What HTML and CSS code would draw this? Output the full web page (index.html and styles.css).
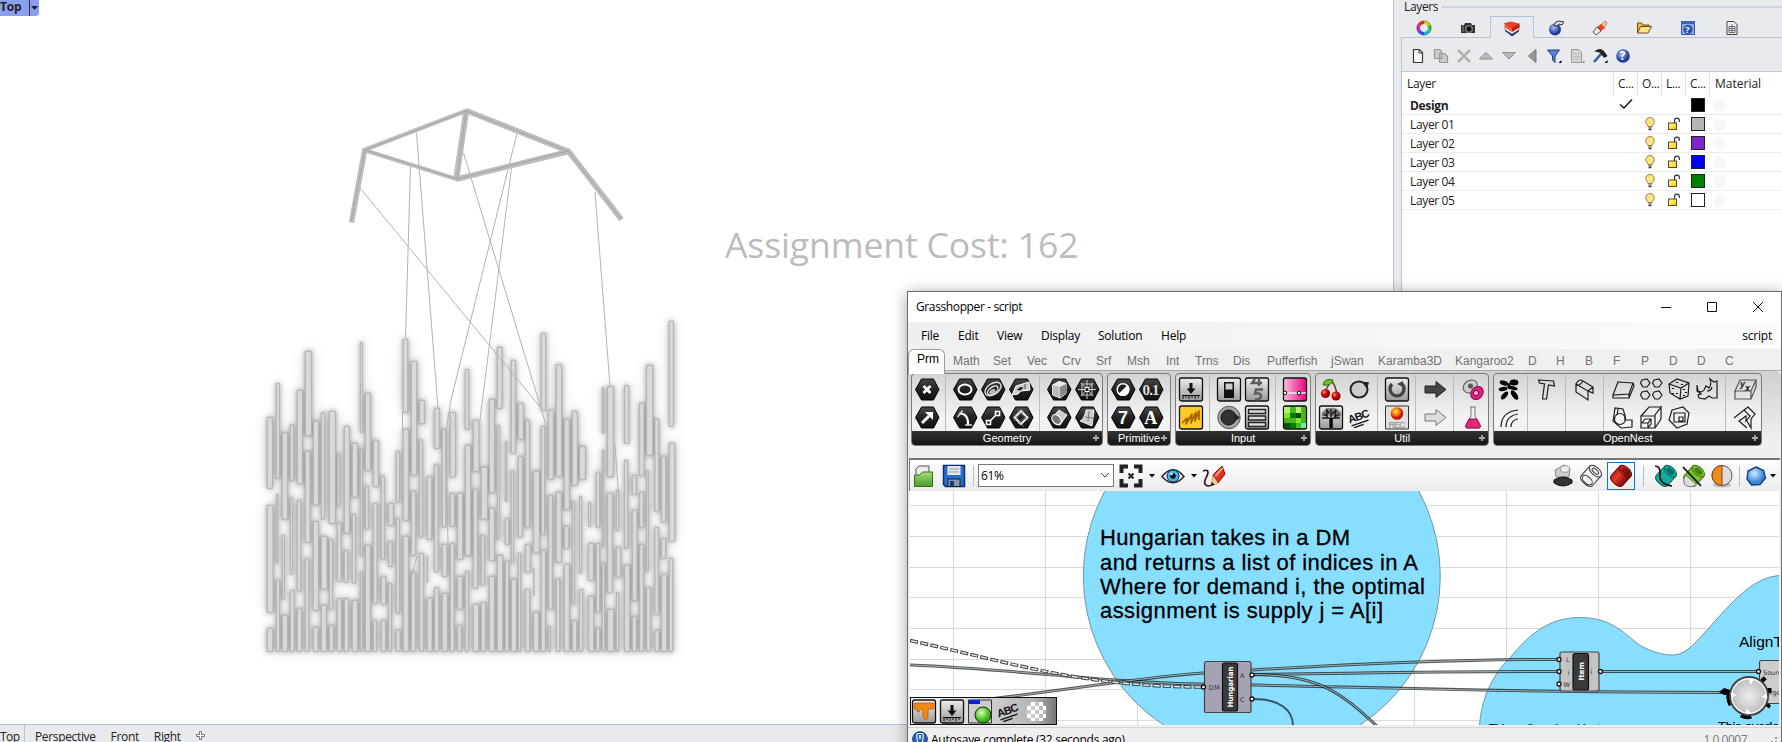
FILE: index.html
```html
<!DOCTYPE html>
<html lang="en">
<head>
<meta charset="utf-8">
<title>Grasshopper - script</title>
<link rel="stylesheet" href="styles.css">
</head>
<body>
<svg class="defs" width="0" height="0" aria-hidden="true">
  <defs>
    <linearGradient id="gBlack" x1="0" y1="0" x2="0" y2="1"><stop offset="0" stop-color="#484848"/><stop offset=".5" stop-color="#222"/><stop offset="1" stop-color="#111"/></linearGradient>
    <linearGradient id="gGrey" x1="0" y1="0" x2="0" y2="1"><stop offset="0" stop-color="#eee"/><stop offset="1" stop-color="#999"/></linearGradient>
    <linearGradient id="gPink"><stop offset="0" stop-color="#f6bfdc"/><stop offset="1" stop-color="#f0007c"/></linearGradient>
    <linearGradient id="gYellow" x1="0" y1="0" x2="1" y2="1"><stop offset="0" stop-color="#fff8b0"/><stop offset="1" stop-color="#ffc800"/></linearGradient>
    <linearGradient id="gFolder" x1="0" y1="0" x2="0" y2="1"><stop offset="0" stop-color="#a8dc7c"/><stop offset="1" stop-color="#4c9a2a"/></linearGradient>
    <linearGradient id="gRed"><stop offset="0" stop-color="#c81c14"/><stop offset=".35" stop-color="#e8382c"/><stop offset="1" stop-color="#7a0c06"/></linearGradient>
    <radialGradient id="gCherry" cx=".35" cy=".35"><stop offset="0" stop-color="#ff9a90"/><stop offset=".5" stop-color="#e01010"/><stop offset="1" stop-color="#900"/></radialGradient>
    <radialGradient id="gOrange" cx=".4" cy=".35"><stop offset="0" stop-color="#ffe680"/><stop offset=".5" stop-color="#ff8a00"/><stop offset="1" stop-color="#c01800"/></radialGradient>
    <radialGradient id="gGreen" cx=".4" cy=".35"><stop offset="0" stop-color="#d8ffb0"/><stop offset="1" stop-color="#34b810"/></radialGradient>
    <radialGradient id="gBlue" cx=".4" cy=".35"><stop offset="0" stop-color="#a8c0f4"/><stop offset="1" stop-color="#1c3c9c"/></radialGradient>
    <radialGradient id="gSky" cx=".4" cy=".35"><stop offset="0" stop-color="#d0ecff"/><stop offset="1" stop-color="#3a86dc"/></radialGradient>
    <radialGradient id="gKnob"><stop offset="0" stop-color="#eee"/><stop offset="1" stop-color="#bbb"/></radialGradient>
    <symbol id="hex" viewBox="0 0 28 28"><path d="M2.500 14.500 8.500 4h12l5.500 10.500L20.500 25h-12z" fill="url(#gBlack)" stroke="#000"/></symbol>
    <symbol id="tile" viewBox="0 0 28 28"><rect x="2.500" y="3" width="23" height="23" rx="2" fill="url(#gGrey)" stroke="#111" stroke-width="1.300"/></symbol>
    <symbol id="abc" viewBox="0 0 28 28"><g transform="rotate(-19 14 14)"><text x="3" y="17" class="abc-text" textLength="22">ABC</text><path d="M4 20h18M6 22.500h10" stroke="#111" stroke-width="1.300"/></g></symbol>
    <symbol id="down" viewBox="0 0 28 28"><path d="M14 8v6" stroke="#111" stroke-width="3"/><path d="M9.500 13.500h9L14 19z" fill="#111"/><path d="M5 20.500h18M6 20v4M9 20v3M12 20v4M15 20v3M18 20v4M21 20v3" stroke="#111"/></symbol>
    <symbol id="cyl" viewBox="0 0 24 24"><g transform="rotate(42 12 12)"><path d="M4.500 6v12q0 4 7.500 4t7.500-4V6z"/><ellipse cx="12" cy="5.500" rx="7.500" ry="4"/><ellipse cx="12" cy="5.500" rx="4" ry="1.900" fill="#000" fill-opacity=".35"/></g></symbol>
    <symbol id="bulb" viewBox="0 0 14 14"><path d="M5 9.500C4.500 7.500 2.800 7 2.800 4.700a4.200 4.200 0 0 1 8.400 0C11.200 7 9.500 7.500 9 9.500z" fill="#ffe48a" stroke="#96701c" stroke-width=".9"/><path d="M5.200 11h3.600M5.600 12.600h2.800" stroke="#333" stroke-width="1.200"/></symbol>
    <symbol id="lock" viewBox="0 0 14 14"><path d="M7.500 6V3.500a2.300 2.300 0 0 1 4.800 0V5" fill="none" stroke="#333" stroke-width="1.200"/><rect x="1.500" y="6" width="8" height="6.500" fill="url(#gYellow)" stroke="#5a4a18"/></symbol>
    <symbol id="plus" viewBox="0 0 8 8"><path d="M4 1v6M1 4h6" stroke="#aaa" stroke-width="1.800"/></symbol>
  </defs>
</svg>

<main class="viewport">
  <svg class="scene" viewBox="0 0 1393 724">
    <defs>
      <filter id="soft" x="-10%" y="-10%" width="120%" height="120%"><feGaussianBlur stdDeviation="8"/></filter>
      <filter id="wide" x="-10%" y="-10%" width="120%" height="120%"><feGaussianBlur stdDeviation="20"/></filter>
    </defs>
    <g transform="translate(240 300) scale(.33333)">
      <g id="haze" filter="url(#wide)" opacity=".2"></g>
      <g id="shade" filter="url(#soft)" opacity=".58"></g>
      <g id="bars"></g>
    </g>
    <g class="links">
      <path d="M360 188 541 408M410.500 166 405.500 338M416.500 133 438 408M463.500 153 546 425L549 436M517 133 451 400M511.500 168 480 420M595 192 610 386M615 445 619 500M451 400 446 431 448 545M417 556 412 575M402.500 412V434"/>
    </g>
    <g class="frame">
      <path d="M364 150 467 110.500" stroke-width="4.500"/><path d="M466 110.500 569 151.500" stroke-width="5.500"/>
      <path d="M365 148.500 351.500 222.500" stroke-width="5.500"/><path d="M364 150 458 179.500" stroke-width="4"/>
      <path d="M466.500 109.500 456 180" stroke-width="6"/><path d="M457 179 569 151.500" stroke-width="5.500"/>
      <path d="M567.500 150 621.500 219.500" stroke-width="5.500"/>
    </g>
    <path class="frame-axis" d="M351 222 365 150 466 111 568 151 621 219M365 150 457 179 568 151M466 111 457 179"/>
    <text x="725" y="258" class="cost" textLength="353.500">Assignment Cost: 162</text>
  </svg>
  <div class="view-tag"><b>Top</b><svg width="10" height="16"><path d="M1 6h7L4.500 10z" fill="#222"/></svg></div>
  <nav class="view-tabs"><span class="on">Top</span><span>Perspective</span><span>Front</span><span>Right</span><svg width="10" height="10"><path d="M3.500.5h2v3h3v2h-3v3h-2v-3h-3v-2h3z" fill="#fff" stroke="#777"/></svg></nav>
</main>

<aside class="panel">
  <div class="panel-title"><span>Layers</span></div>
  <div class="panel-tabs">
    <i><svg viewBox="0 0 16 16"><g fill="none" stroke-width="3.200"><path d="M8 2.500a5.500 5.500 0 0 1 4.800 2.700" stroke="#f4c400"/><path d="M12.800 5.200a5.500 5.500 0 0 1 0 5.600" stroke="#30c830"/><path d="M12.800 10.800A5.500 5.500 0 0 1 8 13.500" stroke="#10b8d0"/><path d="M8 13.500a5.500 5.500 0 0 1-4.800-2.700" stroke="#2848f0"/><path d="M3.200 10.800a5.500 5.500 0 0 1 0-5.600" stroke="#d818c8"/><path d="M3.200 5.200A5.500 5.500 0 0 1 8 2.500" stroke="#f02818"/></g><circle cx="8" cy="8" r="7.200" fill="none" stroke="#444" stroke-width=".5"/></svg></i>
    <i><svg viewBox="0 0 16 16"><path d="M1 5h3l1-2h6l1 2h3v8H1z" fill="#333"/><circle cx="9" cy="9" r="4" fill="#777"/><circle cx="9" cy="9" r="2.500" fill="#111"/><path d="M3 5v7" stroke="#888"/></svg></i>
    <i class="on"><svg viewBox="0 0 16 16"><path d="M1 6v4l7 5.500 7-5V6z" fill="#223a7c"/><path d="M.8 5v3.500L8 13l7.200-4.500V5z" fill="#f4f4f4" stroke="#555" stroke-width=".5"/><path d="M.5 2.500 8 6v5L1 6.500z" fill="#ff5a30"/><path d="M.5 2.500 7 1l8.500 2L8 6.500z" fill="#f04020" stroke="#a41c08" stroke-width=".5"/><path d="M8 6.500 15.500 3v3.500L8 11z" fill="#b82008"/></svg></i>
    <i><svg viewBox="0 0 16 16"><circle cx="7" cy="9.500" r="6" fill="url(#gBlue)"/><path d="M6 5q1-4 5-4l5 1-2 3-3-1-2 2z" fill="#ddd" stroke="#333"/></svg></i>
    <i><svg viewBox="0 0 16 16"><path d="m9 5 4-4 2 2-3 5z" fill="#f4c890" stroke="#84502c" stroke-width=".6"/><path d="m5 7 4-3 4 4-4 3z" fill="#ee3c1c"/><path d="m1 12 4-5 4 4-5 4z" fill="#eee" stroke="#555"/></svg></i>
    <i><svg viewBox="0 0 16 16"><path d="M1.500 13V3h4l1.500 2h6v2" fill="#e8b838" stroke="#6c4c10"/><path d="m1.500 13 3-6.500h11L12 13z" fill="#ffe48c" stroke="#6c4c10"/></svg></i>
    <i><svg viewBox="0 0 16 16"><path d="M1.500 1.500h13v13h-13z" fill="#8cacec" stroke="#38549c"/><path d="M1 1h14v3H1z" fill="#4064b8"/><circle cx="8" cy="9.500" r="4.600" fill="#2c50b0"/><text x="5.300" y="13" class="qmark-s">?</text></svg></i>
    <i><svg viewBox="0 0 16 16"><path d="M3 1.500h7l3 3v10H3z" fill="#eee" stroke="#444"/><path d="M5 6.500h6v6H5zM5 8.500h6M5 10.500h6M8 4v9" stroke="#555" fill="none" stroke-width=".8"/></svg></i>
  </div>
  <div class="panel-body">
    <div class="panel-tools">
      <i><svg viewBox="0 0 16 16"><path d="M3.500 1.500h6l3 3v10h-9z" fill="#fff" stroke="#333" stroke-width="1.200"/><path d="M9 1.500v3.500h3.500" fill="none" stroke="#333"/></svg></i>
      <i><svg viewBox="0 0 16 16"><path d="M1.500 1.500h5l2 2v7h-7zM6.500 5.500h5l3 3v6h-8z" fill="#ccc" stroke="#999" stroke-width="1.200"/></svg></i>
      <i><svg viewBox="0 0 16 16"><path d="M2 2l12 12M14 2 2 14" stroke="#aaa" stroke-width="2.400"/></svg></i>
      <i><svg viewBox="0 0 16 16"><path d="M1.500 11h13L8 4.500z" fill="#bbb" stroke="#8c8c8c"/></svg></i>
      <i><svg viewBox="0 0 16 16"><path d="M1.500 4.500h13L8 11z" fill="#bbb" stroke="#8c8c8c"/></svg></i>
      <i><svg viewBox="0 0 16 16"><path d="M12 1.500v13L4.500 8z" fill="#999" stroke="#777"/></svg></i>
      <i><svg viewBox="0 0 16 16"><path d="M1.500 2h12L9 8v6.500L6.500 12V8z" fill="#5c84d4" stroke="#1c3c88"/><path d="M15.500 12v3h-3z"/></svg></i>
      <i><svg viewBox="0 0 16 16"><path d="M2.500 1.500h7l3 3v10h-10z" fill="#d4d4d4" stroke="#999"/><path d="M4 6h6M4 8.500h6M4 11h6" stroke="#bbb"/><path d="M15.500 12v3h-3z" fill="#999"/></svg></i>
      <i><svg viewBox="0 0 16 16"><path d="M2 14 9 6" stroke="#345ca8" stroke-width="2.600"/><path d="M2.500 3.500C5 .5 9 0 11.500 2.500L15.500 8l-3 2L9 6.500 7.500 4.500z" fill="#222"/><path d="M15.500 12v3h-3z"/></svg></i>
      <i><svg viewBox="0 0 16 16"><circle cx="8" cy="8" r="6.800" fill="url(#gBlue)"/><text x="4.700" y="12.300" class="qmark">?</text></svg></i>
    </div>
    <div class="table">
      <div class="row head"><span>Layer</span><span>C...</span><span>O...</span><span>L...</span><span>C...</span><span>Material</span></div>
      <div class="row current"><span>Design</span><span><svg width="14" height="12"><path d="M1 6.500 5 10 13 1.500" fill="none" stroke="#111" stroke-width="1.400"/></svg></span><span></span><span></span><span><i class="sw black"></i></span><span><i class="mat"></i></span></div>
      <div class="row"><span>Layer 01</span><span></span><span><svg><use href="#bulb"/></svg></span><span><svg><use href="#lock"/></svg></span><span><i class="sw grey"></i></span><span><i class="mat"></i></span></div>
      <div class="row"><span>Layer 02</span><span></span><span><svg><use href="#bulb"/></svg></span><span><svg><use href="#lock"/></svg></span><span><i class="sw violet"></i></span><span><i class="mat"></i></span></div>
      <div class="row"><span>Layer 03</span><span></span><span><svg><use href="#bulb"/></svg></span><span><svg><use href="#lock"/></svg></span><span><i class="sw blue"></i></span><span><i class="mat"></i></span></div>
      <div class="row"><span>Layer 04</span><span></span><span><svg><use href="#bulb"/></svg></span><span><svg><use href="#lock"/></svg></span><span><i class="sw green"></i></span><span><i class="mat"></i></span></div>
      <div class="row"><span>Layer 05</span><span></span><span><svg><use href="#bulb"/></svg></span><span><svg><use href="#lock"/></svg></span><span><i class="sw white"></i></span><span><i class="mat"></i></span></div>
    </div>
  </div>
</aside>

<section class="window">
  <header class="title"><span>Grasshopper - script</span>
    <div class="controls"><svg viewBox="0 0 12 12"><path d="M1 6.500h10"/></svg><svg viewBox="0 0 12 12"><path d="M1.500 1.500h9v9h-9z"/></svg><svg viewBox="0 0 12 12"><path d="m1 1 10 10M11 1 1 11"/></svg></div>
  </header>
  <nav class="menu"><span>File</span><span>Edit</span><span>View</span><span>Display</span><span>Solution</span><span>Help</span><span class="doc">script</span></nav>
  <nav class="tabs"><span class="on">Prm</span><span>Math</span><span>Set</span><span>Vec</span><span>Crv</span><span>Srf</span><span>Msh</span><span>Int</span><span>Trns</span><span>Dis</span><span>Pufferfish</span><span>jSwan</span><span>Karamba3D</span><span>Kangaroo2</span><span>D</span><span>H</span><span>B</span><span>F</span><span>P</span><span>D</span><span>D</span><span>C</span></nav>

  <div class="ribbon">
    <div class="group">
      <div class="icons">
        <div class="set">
          <svg viewBox="0 0 28 28"><use href="#hex"/><path d="m10.500 11 7 7M17.500 11l-7 7" stroke="#fff" stroke-width="2.800"/></svg>
          <svg viewBox="0 0 28 28"><use href="#hex"/><path d="m9 20 7-7" stroke="#fff" stroke-width="3"/><path d="M12 9h8v8z" fill="#fff"/></svg>
        </div>
        <div class="set">
          <svg viewBox="0 0 28 28"><use href="#hex"/><ellipse cx="14" cy="14.500" rx="6.500" ry="5" fill="none" stroke="#fff" stroke-width="2"/></svg>
          <svg viewBox="0 0 28 28"><use href="#hex"/><path d="M8.500 10.500q9 0 8.500 11.500" fill="none" stroke="#fff" stroke-width="2.200"/><path d="m6.500 14 5-6.500M14 22h7" stroke="#ddd" stroke-width="1.400"/></svg>
          <svg viewBox="0 0 28 28"><use href="#hex"/><g transform="rotate(-35 14 14)" fill="none" stroke="#ddd" stroke-width="1.500"><ellipse cx="14" cy="14" rx="9" ry="5.500"/><ellipse cx="13" cy="15" rx="6" ry="3.200"/><ellipse cx="12" cy="15.500" rx="2.500" ry="1"/></g></svg>
          <svg viewBox="0 0 28 28"><use href="#hex"/><path d="m10 19 9-9" stroke="#fff" stroke-width="1.600"/><path d="M7.500 17.500h4v4h-4zM16.500 8.500h4v4h-4z" fill="#222" stroke="#fff" stroke-width="1.600"/></svg>
          <svg viewBox="0 0 28 28"><use href="#hex"/><path d="m5 20 4-9 13-4 1 8-9 1-3 3z" fill="#ccc" stroke="#fff"/><path d="m9.500 15 4-3 3 .5-3 3z" fill="#222"/><path d="M18 9v5" stroke="#555"/></svg>
          <svg viewBox="0 0 28 28"><use href="#hex"/><path d="m14 8 6.500 6.500L14 21l-6.500-6.500z" fill="none" stroke="#eee" stroke-width="2"/><path d="m7 11 10 13M10.500 7l11 11M21 11 11 21M17 7 7 18" stroke="#888" stroke-width=".7"/></svg>
        </div>
        <div class="set">
          <svg viewBox="0 0 28 28"><use href="#hex"/><path d="m7.500 10 6.500-3.500 7 2v10L15 23l-7.500-3z" fill="#e8e8e8" stroke="#fff"/><path d="m7.500 10 7 2v10.500L7.500 20z" fill="#bbb"/><path d="m15 12 6-3v9.500L15 22.500z" fill="#888"/></svg>
          <svg viewBox="0 0 28 28"><use href="#hex"/><path d="m7 15 7-8 8 5-7 10q-8 0-8-7z" fill="#ccc" stroke="#eee"/><ellipse cx="11.500" cy="16.500" rx="4" ry="5.500" transform="rotate(-40 11.500 16.500)" fill="#777" stroke="#fff"/></svg>
          <svg viewBox="0 0 28 28"><use href="#hex"/><path d="M14 5v19M5 14.500h18M8 8l12 13M20 8 8 21M9 9h10v11H9z" stroke="#ccc" fill="none"/><path d="M12 12.500h4v4h-4z" fill="#222" stroke="#fff"/></svg>
          <svg viewBox="0 0 28 28"><use href="#hex"/><path d="M13 7h8l-2 16-12-5q4-1 6-11z" fill="#ccc" stroke="#eee"/><path d="m12 14 8 1M15 18l1-10" stroke="#666" stroke-width=".8"/></svg>
        </div>
      </div>
      <footer><span>Geometry</span><svg><use href="#plus"/></svg></footer>
    </div>

    <div class="group">
      <div class="icons">
        <div class="set">
          <svg viewBox="0 0 28 28"><use href="#hex"/><circle cx="14" cy="14.500" r="5.800" fill="#222" stroke="#fff" stroke-width="1.500"/><path d="M18.500 10a6 6 0 0 1-9 9z" fill="#fff"/></svg>
          <svg viewBox="0 0 28 28"><use href="#hex"/><text x="9" y="20.500" class="glyph">7</text></svg>
          <svg viewBox="0 0 28 28"><use href="#hex"/><text x="5.500" y="20" class="glyph thin" textLength="17">0.1</text></svg>
          <svg viewBox="0 0 28 28"><use href="#hex"/><text x="7.200" y="20.500" class="glyph serif">A</text></svg>
        </div>
      </div>
      <footer><span>Primitive</span><svg><use href="#plus"/></svg></footer>
    </div>

    <div class="group">
      <div class="icons">
        <div class="set">
          <svg viewBox="0 0 28 28"><use href="#tile"/><use href="#down"/></svg>
          <svg viewBox="0 0 28 28"><rect x="2.500" y="3" width="23" height="23" rx="2" fill="#ffcb28" stroke="#111" stroke-width="1.300"/><path d="m5 20 5-5-1 6 6-10-1 9 5-11-1 9 4-10v9" fill="none" stroke="#a86000" stroke-width="1.700" stroke-linejoin="round"/></svg>
        </div>
        <div class="set">
          <svg viewBox="0 0 28 28"><use href="#tile"/><path d="M9 7h10v16H9z" fill="#111"/><path d="M10.500 8.500h7v6h-7z" fill="#ccc"/></svg>
          <svg viewBox="0 0 28 28"><circle cx="14" cy="14.500" r="11.200" fill="#a4a4a4" stroke="#555"/><circle cx="13.500" cy="14.500" r="7.500" fill="#333" stroke="#111"/><path d="m19 10 6 4.500-6 4.500z" fill="#222"/></svg>
          <svg viewBox="0 0 28 28"><use href="#tile"/><g fill="none" stroke="#5c5c5c" stroke-width="2.400"><path d="m12 4-3 4h10M16 3v8M20 14.500h-7l-1 4q6-1 6 2.500t-6 3.500"/></g></svg>
          <svg viewBox="0 0 28 28"><use href="#tile"/><path d="M5.500 6.500h17v4h-17zM5.500 13h17v4h-17zM5.500 19.500h17v4h-17z" fill="#ddd" stroke="#222" stroke-width="1.400"/></svg>
        </div>
        <div class="set">
          <svg viewBox="0 0 28 28"><rect x="2.500" y="3" width="23" height="23" rx="2" fill="url(#gPink)" stroke="#111" stroke-width="1.300"/><path d="M3 18h22" stroke="#eee" stroke-width="1.300"/><circle cx="4" cy="18" r="1.800" fill="#fff" stroke="#111"/><circle cx="18" cy="18" r="1.800" fill="#fff" stroke="#111"/></svg>
          <svg viewBox="0 0 28 28"><rect x="2.500" y="3" width="23" height="23" rx="2" fill="#46b818" stroke="#111" stroke-width="1.300"/><path d="M3 4h6v6H3zM15 4h5v6h-5z" fill="#b8f070"/><path d="M3 10h6v5H3zM15 15h5v5h-5z" fill="#78e828"/><path d="M9 10h6v5H9zM9 20h6v5H9z" fill="#087808"/><path d="M15 10h5v5h-5zM3 20h6v5H3z" fill="#0c4c10"/><path d="M20 20h5v5h-5z" fill="#60f0b0"/></svg>
        </div>
      </div>
      <footer><span>Input</span><svg><use href="#plus"/></svg></footer>
    </div>

    <div class="group">
      <div class="icons">
        <div class="set">
          <svg viewBox="0 0 28 28"><path d="M8 17Q12 8 15 6q4 6 5 14" fill="none" stroke="#5a3c18" stroke-width="1.400"/><path d="M6 10Q7 3 16 5q-1 6-10 5z" fill="#70c020" stroke="#2c7008"/><circle cx="8.500" cy="18.500" r="4.600" fill="url(#gCherry)"/><circle cx="19" cy="21" r="4.600" fill="url(#gCherry)"/></svg>
          <svg viewBox="0 0 28 28"><use href="#tile"/><path d="M13 25V16L7 11M15 25v-9l7-5M14 18V6M10 14V8M18 14l1-7M12 10 9 6M15 11l4-4M17 15h6M11 15H5" stroke="#111" stroke-width="1.300" fill="none"/><path d="M13 15h2.500v10H13z"/><path d="M5 13q-1-4 3-6 2-3 6-2 5-1 7 2 4 2 3 6-4 2-7 0-3 1-6-1-3 2-6 1z" fill="#111" opacity=".45"/></svg>
          <svg viewBox="0 0 28 28"><ellipse cx="14" cy="14.500" rx="8.500" ry="8" fill="#ccc" stroke="#222" stroke-width="2"/><path d="M17 7h7l-2 7z" fill="#222"/></svg>
          <svg viewBox="0 0 28 28"><use href="#abc"/></svg>
        </div>
        <div class="set">
          <svg viewBox="0 0 28 28"><use href="#tile"/><path d="M9 9a7 7 0 1 0 10 0" fill="none" stroke="#444" stroke-width="3.400"/><path d="m20 12-6-3 6-3z" fill="#444"/></svg>
          <svg viewBox="0 0 28 28"><path d="M2.500 3h23v23h-23z" fill="#e0e0e0" stroke="#333"/><circle cx="14" cy="10.500" r="6.300" fill="url(#gOrange)"/><text x="5.500" y="25" class="rec" textLength="17">REC</text></svg>
        </div>
        <div class="set">
          <svg viewBox="0 0 28 28"><path d="M4 11h11V6.500l10 8-10 8V18H4z" fill="#444" stroke="#222"/></svg>
          <svg viewBox="0 0 28 28"><path d="M4 11h11V6.500l10 8-10 8V18H4z" fill="#ddd" stroke="#777"/></svg>
        </div>
        <div class="set">
          <svg viewBox="0 0 28 28"><ellipse cx="11" cy="11.500" rx="7.500" ry="6" transform="rotate(-35 11 11)" fill="#ccc" stroke="#555"/><circle cx="11.500" cy="11" r="2.500" fill="#555"/><ellipse cx="18" cy="18" rx="7" ry="5.800" transform="rotate(-50 18 18)" fill="#e0207c" stroke="#801048"/><circle cx="17" cy="18" r="2.600" fill="#fac" stroke="#604"/></svg>
          <svg viewBox="0 0 28 28"><path d="M11 4h6M12 4v9L6.500 23q0 2 2 2h11q2 0 2-2L16 13V4" fill="#eee" stroke="#777"/><path d="m10 16-3.500 7q0 2 2 2h11q2 0 2-2L18 16z" fill="#e02878" stroke="#a01050"/></svg>
        </div>
      </div>
      <footer><span>Util</span><svg><use href="#plus"/></svg></footer>
    </div>

    <div class="group line">
      <div class="icons">
        <div class="set">
          <svg viewBox="0 0 28 28"><g fill="#000" stroke="none"><ellipse cx="9" cy="8" rx="4.500" ry="2.300" transform="rotate(20 9 8)"/><ellipse cx="19" cy="7.500" rx="4.400" ry="2.900"/><ellipse cx="8" cy="14" rx="4.500" ry="2" transform="rotate(-10 8 14)"/><ellipse cx="18" cy="13" rx="4.800" ry="1.900" transform="rotate(15 18 13)"/><ellipse cx="9.500" cy="20.500" rx="4.800" ry="2.300" transform="rotate(-50 9.500 20.500)"/><ellipse cx="19.500" cy="20" rx="5.500" ry="2.600" transform="rotate(55 19.500 20)"/><ellipse cx="14" cy="11" rx="1.600" ry="3"/></g></svg>
          <svg viewBox="0 0 28 28"><path d="M6 24Q6 9 23 7M11 24q0-11 12-13M16 24q0-7 7-8"/></svg>
        </div>
        <div class="set">
          <svg viewBox="0 0 28 28"><path d="m5.500 5 15 1 1 5-6-1-2 14h-4l2-15-5-1z"/></svg>
        </div>
        <div class="set">
          <svg viewBox="0 0 28 28"><path d="m5 9 12 7v9L5 17zM5 9q3-6 7-3l10 6v6l-5-2M22 12l-5 4M5 9q2 4 7-3"/></svg>
        </div>
        <div class="set">
          <svg viewBox="0 0 28 28"><path d="m9 7 15 1-4 11-16 1zM4 20v3h16v-4M20 23l5-12-1-3"/></svg>
          <svg viewBox="0 0 28 28"><path d="m5 12 1-7 8 1 2 6v5h7v7l-11 1-8-7zM9 6l-1 6"/><circle cx="11" cy="16" r="5.500"/></svg>
          <svg viewBox="0 0 28 28"><path d="m5 5 5-1 3 4-3 4H6L3.500 8zM17 5l5-1 3 4-3 4h-4l-2.500-4zM5 17l5-1 3 4-3 4H6l-2.500-4zM17 17l5-1 3 4-3 4h-4l-2.500-4z"/></svg>
          <svg viewBox="0 0 28 28"><path d="M4 13 12 4h12l-6 8v13H4zM4 13h14M18 12l6-8v12l-6 9M5 20l3-4h6v5l-3 4M5 20h6v5M11 20l3-4"/></svg>
          <svg viewBox="0 0 28 28"><path d="m4 9 8-5 12 4-1 13-8 3-10-6zM4 9l12 4 8-5M16 13l-1 11"/><path d="M8 13v1M12 18v1M8 18v1M19 14v1M21 17v1M19 20v1M12 7v1M17 9v1" stroke-width="2.200"/></svg>
          <svg viewBox="0 0 28 28"><path d="m7 7 11-3 6 6-2 11-10 4-8-8zM9 10h11v9H9zM14 14h4v4h-4z"/></svg>
          <svg viewBox="0 0 28 28"><path d="m4 10 1 6q4 2 6-1l2-4 3 2q3-4 1-9l4 3 3-1v17h-5l-3-2-4 3-6-1-1-3 3-1-4-3zM14 16q4 0 5-4"/></svg>
        </div>
        <div class="set">
          <svg viewBox="0 0 28 28"><path d="M4 16 9 5h16l-5 11zM4 16v8h16v-8M20 24l5-12V5" stroke="#555"/><text x="9" y="12" class="xy">y</text><text x="14" y="16" class="xy">x</text></svg>
          <svg viewBox="0 0 28 28"><path d="m3 15 10-8 6 6-4 5v-5l-7 5 8 7M13 7l4-3 7 7-4 5v9l-4-7"/></svg>
        </div>
      </div>
      <footer><span>OpenNest</span><svg><use href="#plus"/></svg></footer>
    </div>
  </div>

  <div class="toolbar">
    <svg viewBox="0 0 24 24"><path d="M4 13V5l3-3h10v9" fill="#eee" stroke="#555"/><path d="M2.500 22.500V11h5l3-3h10v14.500z" fill="url(#gFolder)" stroke="#356c1c"/></svg>
    <svg class="save" viewBox="0 0 24 24"><path d="M1.500 1.500h21v21h-19l-2-2z" fill="#2c6cd0" stroke="#0c2c70" stroke-width="1.500"/><path d="M5.500 2h13v9h-13z" fill="#e4e8f0"/><path d="M7 5h10M7 8h10" stroke="#999"/><path d="M6 15h12v7.500H6z" fill="#8c98a8" stroke="#123"/><path d="M8 17h4v5H8z" fill="#123a80"/></svg>
    <b class="bar"></b>
    <div class="zoom"><span>61%</span><svg width="10" height="6"><path d="m1 1 4 4 4-4" fill="none" stroke="#444"/></svg></div>
    <svg viewBox="0 0 24 24"><path d="M9 2.500H2.500V9M15 2.500h6.500V9M9 21.500H2.500V15M15 21.500h6.500V15" fill="none" stroke="#222" stroke-width="4"/><path d="m9.500 9.500 5 5M14.500 9.500l-5 5" stroke="#222" stroke-width="2"/></svg>
    <svg class="caret" viewBox="0 0 6 4"><path d="M0 0h6L3 3.500z"/></svg>
    <svg viewBox="0 0 24 24"><path d="M1 12.500Q12-1 23 12.500 12 25 1 12.500z" fill="#eee" stroke="#222" stroke-width="1.400"/><circle cx="12" cy="12" r="6" fill="#48b4e0" stroke="#125"/><circle cx="12" cy="12" r="2.800" fill="#012"/><circle cx="10.500" cy="10" r="1.200" fill="#fff"/></svg>
    <svg class="caret" viewBox="0 0 6 4"><path d="M0 0h6L3 3.500z"/></svg>
    <svg viewBox="0 0 24 24"><path d="M1 7q5-2 5 1.500C6 12 1 17 3 20s5 2 6 1" fill="none" stroke="#411" stroke-width="1.700"/><path d="m11 11 9-9 3 8-7 9z" fill="#e03020" stroke="#8c1008"/><path d="m11 11 5 8-7 3z" fill="#f4d090" stroke="#965" stroke-width=".6"/><path d="m13.500 12 7-8" stroke="#ff9a80" stroke-width="2"/><path d="m9 22 .8-4 2.700 2.600z"/></svg>
    <span class="grow"></span>
    <svg viewBox="0 0 24 24"><path d="M4 6 13 1l6 3-1 9H5z" fill="#ccc" stroke="#888"/><ellipse cx="14" cy="5" rx="4.500" ry="3.300" fill="#eee" stroke="#999"/><path d="M3 16q9-6 18 0v3q-9 6-18 0z" fill="#333" stroke="#111"/></svg>
    <svg viewBox="0 0 24 24"><g transform="rotate(42 12 12)" fill="#f6f6f6" stroke="#333"><path d="M4.500 6v12q0 4 7.500 4t7.500-4V6z"/><ellipse cx="12" cy="5.500" rx="7.500" ry="4"/><ellipse cx="12" cy="5.500" rx="4" ry="1.900"/><ellipse cx="12" cy="17.500" rx="6" ry="3.300"/></g></svg>
    <i class="picked"><svg viewBox="0 0 24 24"><use href="#cyl" fill="url(#gRed)" stroke="#5c0804"/></svg></i>
    <b class="bar"></b>
    <svg viewBox="0 0 24 24"><use href="#cyl" fill="#18a8a0" stroke="#065"/><path d="M1 2q6 0 5 9t12 11" fill="none" stroke="#111" stroke-width="1.600"/></svg>
    <svg viewBox="0 0 24 24"><use href="#cyl" fill="#78c428" stroke="#3a7008"/><path d="m3.500 11 11 9.500Q8 25 2.500 20.500 0 16 3.500 11z" fill="#ddd" stroke="#777"/><path d="m1 3 18 19" stroke="#111" stroke-width="1.800"/></svg>
    <svg viewBox="0 0 24 24"><ellipse cx="12" cy="21" rx="9" ry="2.500" fill="#bbb"/><circle cx="12" cy="11.500" r="10" fill="#ddd" stroke="#555"/><path d="M12 1.500a10 10 0 0 0 0 20z" fill="#ee8c20" stroke="#844400"/></svg>
    <b class="bar last"></b>
    <svg viewBox="0 0 24 24"><path d="m12 3 7.500 3.500L21.500 14 16 20.500 7.500 21 3 15l1-8z" fill="url(#gSky)" stroke="#1a3c80" stroke-width="1.400"/></svg>
    <svg class="caret" viewBox="0 0 6 4"><path d="M0 0h6L3 3.500z"/></svg>
  </div>

  <div class="canvas">
    <svg viewBox="910 491 869 234">
      <path class="grid" d="M953.500 491v234M1045.500 491v234M1137.500 491v234M1414.500 491v234M1506.500 491v234M1598.500 491v234M1690.500 491v234M910 505.500h869M910 536.500h869M910 567.500h869M910 597.500h869M910 628.500h869M910 659.500h869M910 689.500h869M910 720.500h869"/>
      <circle class="blob" cx="1261.800" cy="576" r="178.500"/>
      <path class="blob" d="M1479.500 726C1481 700 1492 675 1509 659 1528 636 1547 617.500 1580 617.500S1625 635 1641 646C1650 651 1663 655 1672 655 1686 655 1695 643 1709 628 1735 598 1755 577 1780 575.500V726z"/>
      <g class="notes">
        <text x="1100" y="545" textLength="250">Hungarian takes in a DM</text>
        <text x="1100" y="569.500" textLength="318">and returns a list of indices in A</text>
        <text x="1100" y="594" textLength="325">Where for demand i, the optimal</text>
        <text x="1100" y="618" textLength="283">assignment is supply j = A[i]</text>
      </g>
      <text x="1739" y="647" class="mid-note">AlignTo</text>
      <g class="small-note"><text x="1489" y="732" textLength="111">This realigns the object</text><text x="1718" y="730.500" class="big">This overlays</text></g>
      <g id="wires">
        <path d="M910 665C1030 670 1100 683 1220 684.500S1460 692 1722 692.500"/>
        <path d="M990 699C1090 687 1150 676 1210 672.500S1420 659 1558 659.500"/>
        <path d="M1253 674.500C1380 673 1430 671.500 1558 671.500"/>
        <path d="M1253 674.500C1320 675 1340 692 1378 727"/>
        <path d="M1602 671.500H1758"/>
      </g>
      <path class="chain" d="M910 640.500C1010 662 1080 687 1203 687"/><path class="chain-core" d="M910 640.500C1010 662 1080 687 1203 687"/>
      <path class="single" d="M1253 699C1280 699 1293 710 1293 726"/>
      <g class="node">
        <rect x="1204.500" y="661.500" width="46.500" height="51" rx="2" fill="#a5a3b3"/>
        <rect x="1222.500" y="663" width="15" height="48" rx="2" class="core"/>
        <text transform="translate(1233 707.500) rotate(-90)" class="name" textLength="41" lengthAdjust="spacingAndGlyphs">Hungarian</text>
        <text x="1208.500" y="689.500" class="port" textLength="11">DM</text><text x="1240" y="677.500" class="port">A</text><text x="1240" y="701.500" class="port">C</text>
        <circle cx="1203.500" cy="687" r="2"/><circle cx="1252" cy="675" r="2"/><circle cx="1252" cy="699" r="2"/>
      </g>
      <g class="node">
        <rect x="1560" y="652" width="39" height="39" rx="2" fill="#c4c4c4"/>
        <rect x="1573" y="653.500" width="15.500" height="36.500" rx="2" class="core"/>
        <text transform="translate(1583.500 680.500) rotate(-90)" class="name" textLength="18.500" lengthAdjust="spacingAndGlyphs">Item</text>
        <text x="1566" y="662" class="port">L</text><text x="1567.500" y="674.500" class="port">i</text><text x="1563.500" y="686.500" class="port">W</text><text x="1590.500" y="674" class="port">i</text>
        <circle cx="1559" cy="659.500" r="2"/><circle cx="1559" cy="671.500" r="2"/><circle cx="1559" cy="684" r="2"/><circle cx="1600.500" cy="671.500" r="2"/>
      </g>
      <g class="node">
        <rect x="1759.500" y="660.500" width="30" height="43" rx="2" fill="#ccc"/>
        <text x="1763" y="674.500" class="port">Source</text><text x="1763" y="695" class="port">Target</text>
        <circle cx="1758.500" cy="671.500" r="2"/>
      </g>
      <path d="m1719 692 5-4 6 2v4l-6 1z"/>
      <path d="M1729.500 690q-2 8 1.500 15M1741 715q6 3 10 1M1767 707l2-3M1769 688v5M1762 678l3 3" fill="none" stroke="#000" stroke-width="5"/>
      <circle cx="1749" cy="696" r="18.800" fill="url(#gKnob)" stroke="#444" stroke-width="2.400"/>
      <circle cx="1749" cy="696" r="17.300" fill="none" stroke="#f4f4f4" stroke-width="1.400"/>
      <path d="m1749 679 4 1-2 4zM1767 698l-5-1 4-3zM1747 714l-1-5 5 4zM1731 693l5 2-4 2z" fill="#fff" stroke="#fff"/>
    </svg>
    <div class="widget">
      <svg viewBox="0 0 28 28"><use href="#tile"/><path d="M4 6h20v5q-1 2-3 1-2-1-3 2v6q-2 5-5 0v-6q-1-3-3-1l-1 2q-2 1-2-2-2 0-3-2z" fill="#f08818" stroke="#b05800" stroke-width=".7"/></svg>
      <svg viewBox="0 0 28 28"><use href="#tile"/><use href="#down"/></svg>
      <svg viewBox="0 0 28 28"><path d="M2.500 3h23v23h-23z" fill="#ccc" stroke="#333"/><path d="M3 3h11v4H3z" fill="#1020e0"/><circle cx="17" cy="18" r="8" fill="url(#gGreen)" stroke="#222"/></svg>
      <svg viewBox="0 0 28 28"><use href="#abc"/></svg>
      <svg viewBox="0 0 28 28"><g fill="#fff"><path d="M9 5h4v4H9zM17 5h4v4h-4zM5 9h4v4H5zM13 9h4v4h-4zM21 9h3v4h-3zM9 13h4v4H9zM17 13h4v4h-4zM5 17h4v4H5zM13 17h4v4h-4zM21 17h3v4h-3zM9 21h4v3H9zM17 21h4v3h-4z"/></g><circle cx="14.500" cy="14.500" r="10" fill="#fff" opacity=".3"/></svg>
    </div>
  </div>
  <footer class="status"><svg width="16" height="16" viewBox="0 0 16 16"><circle cx="8" cy="8" r="7.300" fill="#2868b8" stroke="#0c2c60"/><path d="M5 2.500h6V8q0 4-3 4T5 8z" fill="none" stroke="#fff"/><path d="M8 4v4" stroke="#fff" stroke-width="1.500"/></svg><span>Autosave complete (32 seconds ago)</span><em>1.0.0007</em><svg width="10" height="10"><path d="M7 0h2v2H7zM3 4h2v2H3zM7 4h2v2H7z" fill="#999"/></svg></footer>
</section>
<script src="bars.js"></script>
</body>
</html>
```
FILE: styles.css
```css
* { box-sizing: border-box; }
body { margin: 0; width: 1782px; height: 742px; overflow: hidden; display: flex; position: relative; background: #fff; font: 12px "Open Sans", "Noto Sans", sans-serif; color: #222; }
svg { display: block; flex: none; }
.defs { position: absolute; }

.viewport { width: 1393px; height: 742px; display: flex; flex-direction: column; position: relative; }
.scene { width: 1393px; height: 724px; }
.scene rect { fill: #d9d9d9; stroke: #b4b4b4; stroke-width: 3; }
#shade rect { fill: #555; stroke: #555; }
#haze rect { fill: #444; stroke: #444; }
.links { fill: none; stroke: #b2b2b2; stroke-width: 1; }
.frame { fill: none; stroke: #bdbdbd; }
.frame-axis { fill: none; stroke: #a6a6a6; stroke-width: 1; }
.cost { font-size: 35.500px; fill: #bcbcbc; font-weight: 400; }
.view-tag { position: absolute; left: 0; top: 0; width: 39px; height: 16px; background: #8a9ff0; border-radius: 0 0 3px 0; display: flex; justify-content: space-between; line-height: 14px; font-size: 12px; letter-spacing: -.2px; }
.view-tag svg { border-left: 1px solid #333; }
.view-tabs { height: 18px; border-top: 1px solid #b8c0dc; background: #e9eaee; display: flex; gap: 15px; line-height: 23px; letter-spacing: -.35px; align-items: flex-start; }
.view-tabs .on { width: 25px; border-right: 1px solid #b8c0dc; margin-right: -5px; height: 17px; letter-spacing: -.5px; }
.view-tabs svg { margin-top: 6px; }

.panel { width: 389px; height: 742px; background: #e9eaee; border-left: 1px solid #b8c0dc; padding-left: 7px; letter-spacing: -.35px; }
.panel-title { height: 16px; padding-left: 3px; line-height: 14px; display: flex; align-items: center; }
.panel-title::after { content: ""; flex: 1; height: 2px; background: #d0d5e4; margin: 0 0 2px 4px; }
.panel-title span { margin-top: -2px; }
.panel-tabs { display: flex; height: 22px; padding-left: 1px; position: relative; z-index: 1; }
.panel-tabs i { width: 44px; height: 22px; display: grid; place-items: center; padding-top: 2px; }
.panel-tabs svg { width: 16px; height: 16px; }
.panel-tabs .on { border: 1px solid #b8c0dc; border-bottom: 0; background: #e9eaee; }
.panel-body { border: 1px solid #b8c0dc; border-width: 1px 0 0 1px; margin-top: -1px; height: 705px; }
.panel-tools { height: 33px; display: flex; padding: 2px 0 0 5px; align-items: center; }
.panel-tools i { width: 22.700px; display: grid; place-items: center; }
.panel-tools svg { width: 16px; height: 16px; }
.table { height: 671px; background: #fff; border-top: 1px solid #c4cadc; }
.row { display: grid; grid-template-columns: 211px 24px 24px 24px 24px 1fr; height: 19px; border-bottom: 1px solid #ececec; }
.row span { display: flex; align-items: center; justify-content: center; padding-left: 1px; }
.row span:first-child { justify-content: flex-start; padding-left: 8px; }
.row svg { width: 14px; height: 14px; }
.row.head { height: 24px; border: 0; }
.row.head span { justify-content: flex-start; padding: 0 0 1px 4px; border-left: 1px solid #dde0ea; white-space: nowrap; overflow: hidden; }
.row.head span:first-child { border: 0; padding-left: 5px; }
.row.current span:first-child { font-weight: 700; }
.row span:last-child { justify-content: flex-start; padding-left: 4px; }
.row.head span:last-child { padding-left: 5px; letter-spacing: 0; }
.sw { width: 14px; height: 14px; border: 1px solid #222; }
.black { background: #000; } .grey { background: #b4b4b4; } .violet { background: #7c26cc; } .blue { background: #00f; } .green { background: #008000; } .white { background: #fff; }
.mat { width: 13px; height: 13px; border-radius: 50%; background: #f7f7f8; }
.qmark { font: 700 12px "Open Sans", sans-serif; fill: #fff; } .qmark-s { font: 700 9px "Open Sans", sans-serif; fill: #fff; }

.window { position: absolute; left: 907px; top: 291px; width: 875px; height: 470px; border: 1px solid #6e6e6e; background: #efefef; box-shadow: 0 2px 14px rgba(0,0,0,.38); color: #000; display: flex; flex-direction: column; }
.title { height: 30px; background: #fff; display: flex; justify-content: space-between; line-height: 30px; padding-left: 8px; letter-spacing: -.38px; }
.controls { display: flex; gap: 34px; align-items: center; padding: 0 17px 0 0; }
.controls svg { width: 12px; height: 12px; fill: none; stroke: #111; stroke-width: 1; }
.menu { height: 27px; display: grid; grid-template-columns: 37px 39px 44px 57px 63px 1fr auto; padding: 0 9px 0 13px; line-height: 27px; background: linear-gradient(90deg, #efefef, #fbfbfb); letter-spacing: -.22px; }
.tabs { height: 22px; display: grid; grid-template-columns: 37px 40px 34px 35px 34px 31px 39px 29px 38px 34px 64px 47px 77px 73px 28px 29px 28px 28px 28px 28px 28px 1fr; padding-left: 8px; font: 12px/24px "Liberation Sans", Arial, sans-serif; color: #707070; background: #f0f0f0; border-bottom: 1px solid #a8a8a8; }
.tabs .on { color: #000; margin: 0 0 -1px -8px; padding-left: 8px; width: 37px; border: 1px solid #999; border-bottom: 0; border-radius: 6px 6px 0 0; background: #fff; line-height: 19px; z-index: 1; }

.ribbon { height: 87px; display: flex; align-items: flex-start; gap: 4px; padding: 2px 0 0 3px; background: linear-gradient(#cfcfcf, #efefef 70px); border-radius: 0 6px 0 0; }
.group { height: 73px; border: 1px solid #7c7c7c; border-radius: 4px; background: linear-gradient(#d4d4d4, #f4f4f4 45px, #ececec); overflow: hidden; }
.icons { display: flex; height: 57px; padding: 1px 1px 0 1px; }
.set { display: grid; grid-auto-flow: column; grid-template-rows: 28px 28px; }
.set + .set { margin-left: 4px; padding-left: 5px; border-left: 1px solid #bbb; }
.icons svg { width: 28px; height: 28px; }
.group footer { height: 14px; background: linear-gradient(#333, #151515); color: #fff; display: flex; justify-content: space-between; font: 11px/14px "Liberation Sans", Arial, sans-serif; text-align: center; }
.group footer span { flex: 1; padding-left: 10px; }
.group footer svg { width: 8px; height: 8px; margin: 3px 2px 0 0; }
.line .icons svg { fill: none; stroke: #1c1c1c; stroke-width: 1.200; }
.line .icons { padding-right: 2px; }
.glyph { font: 700 18px "Liberation Sans", sans-serif; fill: #fff; }
.glyph.thin { font: 700 15px "Liberation Serif", serif; fill: #ddd; }
.glyph.serif { font: 700 18px "Liberation Serif", serif; }
.abc-text { font: 700 11px "Liberation Sans", sans-serif; fill: #111; stroke: none; }
.rec { font: 9px "Liberation Sans", sans-serif; fill: #888; }
.xy { font: italic 700 9px "Liberation Sans", sans-serif; fill: #111; stroke: none; }

.toolbar { height: 33px; margin: 0 1px; border: 1px solid #777; border-width: 2px 0 0 1px; background: linear-gradient(#fdfdfd, #ececec); display: flex; align-items: center; padding: 0 4px 0 1px; }
.toolbar > svg { width: 24px; height: 24px; margin-left: 1px; }
.toolbar > svg.save { margin-left: 6px; margin-right: 5px; }
.toolbar > svg.caret { width: 6px; height: 4px; margin: 0 4.500px 0 6px; }
.toolbar .grow ~ svg { margin-left: 4px; }
.toolbar > .grow ~ svg.caret { margin: 0 0 0 2px; }
.toolbar .bar { width: 1px; height: 20px; background: #bbb; margin: 0 4px 0 2px; }
.picked { width: 28px; height: 28px; border: 1px solid #0078d7; display: grid; place-items: center; margin: 0 5px 0 4px; }
.picked svg { width: 24px; height: 24px; }
.picked + .bar { margin: 0 6px 0 3px; }
.toolbar .bar.last { margin: 0 0 0 5px; }
.zoom { width: 136px; height: 23px; border: 1px solid #777; background: #fff; display: flex; align-items: center; justify-content: space-between; padding: 0 3px 1px 2px; margin-right: 4px; letter-spacing: -.4px; }
.grow { flex: 1; }

.canvas { width: 869px; height: 234px; margin-left: 2px; background: #fff; position: relative; flex: none; }
.canvas > svg { width: 869px; height: 234px; overflow: hidden; }
.grid { stroke: #dadada; fill: none; }
.blob { fill: #87deff; stroke: #7097a6; stroke-width: 1; }
.notes { font: 22px "Liberation Sans", Arial, sans-serif; stroke: #000; stroke-width: .3; }
.mid-note { font: 15.500px "Liberation Sans", Arial, sans-serif; }
.small-note { font: 11.500px "Liberation Sans", Arial, sans-serif; stroke: #000; stroke-width: .2; }
.small-note .big { font-size: 12.500px; }
#wires { fill: none; }
#wires .rim { stroke: #000; stroke-opacity: .65; stroke-width: 3; }
#wires .mid { stroke: #a2aeb2; stroke-width: 1; }
.chain { fill: none; stroke: #444; stroke-width: 3.400; stroke-dasharray: 8 2.300; }
.chain-core { fill: none; stroke: #e4e9eb; stroke-width: 1.500; stroke-dasharray: 6 4.300; stroke-dashoffset: -1; }
.single { fill: none; stroke: #35505c; stroke-width: 1.800; }
.node rect { stroke: #444; stroke-width: 1.200; }
.node rect.core { fill: #3a3a3a; stroke: #111; }
.node circle { fill: #fff; stroke: #111; stroke-width: 1.300; }
.name { font: 700 7.500px "DejaVu Sans", sans-serif; fill: #fff; }
.port { font: 6.500px "DejaVu Sans", sans-serif; fill: #333; }
.widget { position: absolute; left: 0; top: 206px; width: 147px; height: 28px; border: 1px solid #111; background: linear-gradient(90deg, #fff, #b4b4b4 85%, #777); display: flex; }
.widget svg { width: 28px; height: 28px; margin: -1px 0 0 -1px; }
.widget svg + svg { margin-left: 0; }
.status { height: 28px; margin-top: 2px; border-top: 1px solid #d4d4d4; display: flex; align-items: flex-start; padding: 3px 3px 0 4px; gap: 3px; letter-spacing: -.28px; }
.status em { margin-left: auto; font-style: normal; color: #777; margin-right: 18px; letter-spacing: -.5px; }
.status span, .status em { line-height: 17px; }
.status svg:last-child { margin-top: 6px; }
```
FILE: bars.js
```javascript
// Stock pieces, three to a column: x, then [width, top, bottom] in thirds of a pixel.
const columns = [
  [82,[15,352,565],[17,616,937],[16,985,1054]],[109,[9,250,535],[4,583,790],[9,841,1054]],
  [127,[15,398,658],[6,706,897],[15,946,1054]],[151,[9,374,542],[6,592,823],[11,871,1054]],
  [172,[15,271,552],[10,601,875],[12,925,1054]],[196,[18,154,406],[14,454,727],[10,775,1054]],
  [220,[15,364,615],[15,664,931],[14,982,1054]],[244,[9,338,658],[17,709,867],[15,916,1054]],
  [268,[18,334,670],[9,718,928],[12,976,1054]],[292,[6,462,618],[11,669,844],[12,895,1054]],
  [313,[15,379,700],[10,751,847],[12,895,1054]],[337,[15,430,592],[9,643,850],[15,901,1054]],
  [361,[6,127,397],[6,445,768],[6,816,1054]],[376,[15,280,511],[9,559,687],[15,736,1054]],
  [400,[15,421,559],[11,610,910],[9,961,1054]],[424,[9,528,778],[13,829,913],[13,961,1054]],
  [446,[14,610,676],[10,724,799],[8,850,1054]],[469,[9,454,607],[9,655,940],[11,990,1054]],
  [490,[13,118,337],[15,388,661],[15,709,1054]],[514,[16,184,525],[13,574,766],[12,816,1054]],
  [539,[14,301,371],[8,420,712],[11,760,1054]],[562,[13,530,718],[1,768,847],[14,895,1054]],
  [584,[14,325,445],[10,493,815],[12,863,1054]],[607,[10,388,682],[14,733,829],[15,880,1054]],
  [631,[15,337,531],[12,580,679],[11,730,1054]],[653,[15,580,778],[14,829,928],[11,976,1054]],
  [676,[10,208,388],[16,436,766],[9,814,1054]],[700,[17,361,514],[12,566,865],[16,913,1054]],
  [724,[18,502,657],[9,706,856],[12,907,1054]],[748,[15,298,577],[15,625,781],[15,829,1054]],
  [772,[14,142,325],[6,376,718],[16,766,1054]],[796,[4,424,604],[10,655,733],[10,784,1054]],
  [814,[12,181,460],[6,511,790],[15,838,1054]],[835,[15,310,418],[12,469,712],[7,760,1054]],
  [857,[11,361,683],[14,733,817],[12,868,1054]],[881,[17,514,757],[1,805,887],[15,937,1054]],
  [904,[13,100,330],[10,379,703],[12,751,1054]],[926,[14,331,538],[11,586,928],[5,979,1054]],
  [949,[16,194,529],[15,577,787],[10,836,1054]],[973,[15,358,628],[12,679,745],[15,793,1054]],
  [997,[15,334,556],[6,604,913],[13,963,1054]],[1019,[17,439,538],[6,589,820],[9,868,1054]],
  [1046,[6,607,680],[14,730,841],[15,889,1054]],[1069,[10,517,682],[10,730,936],[10,985,1054]],
  [1087,[4,262,400],[4,450,740],[7,790,1054]],[1103,[17,260,530],[14,580,877],[18,928,1054]],
  [1129,[7,571,691],[13,742,832],[7,878,1054]],[1154,[12,257,430],[9,481,745],[15,796,1054]],
  [1177,[12,526,583],[14,631,901],[12,949,1054]],[1199,[13,310,526],[11,577,682],[11,733,1054]],
  [1220,[18,196,466],[5,514,814],[11,863,1054]],[1245,[11,358,634],[10,682,943],[12,991,1054]],
  [1265,[12,469,667],[12,715,775],[15,823,1054]],[1288,[12,64,379],[16,430,724],[10,775,1054]]
];

const NS = "http://www.w3.org/2000/svg";
for (const id of ["haze", "shade", "bars"]) {
  const group = document.getElementById(id);
  for (const [x, ...pieces] of columns) {
    for (const [w, top, bottom] of pieces) {
      const rect = document.createElementNS(NS, "rect");
      rect.setAttribute("x", x);
      rect.setAttribute("y", top);
      rect.setAttribute("width", w);
      rect.setAttribute("height", bottom - top);
      group.append(rect);
    }
  }
}

// Each wire is drawn as a dark rim with a pale core.
const wires = document.getElementById("wires");
for (const path of [...wires.children]) {
  const core = path.cloneNode();
  path.classList.add("rim");
  core.classList.add("mid");
  path.after(core);
}
```
